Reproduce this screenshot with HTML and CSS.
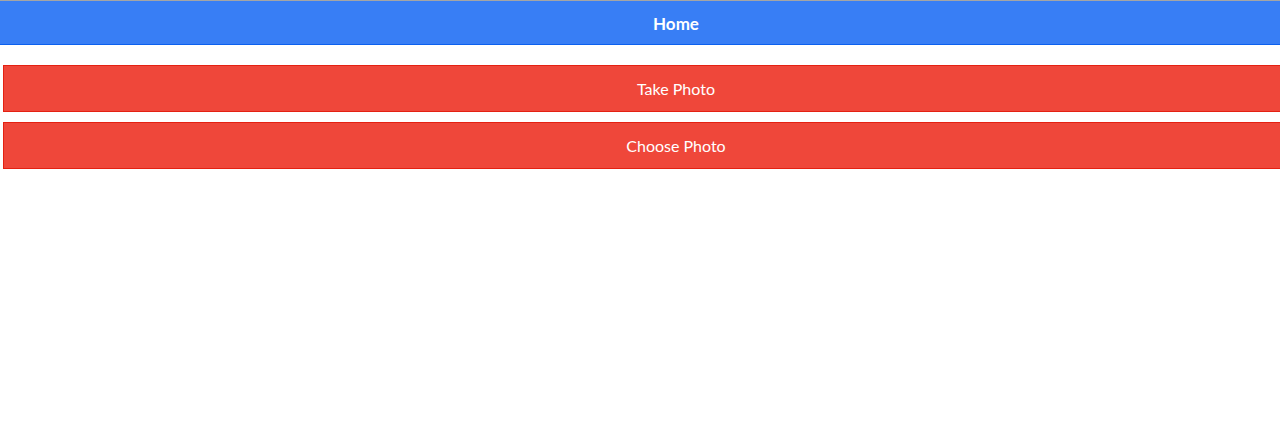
FILE: index.html
```html
<!DOCTYPE html>
<html>
<head>
<meta charset="utf-8">
<link rel="stylesheet" href="styles.css">
</head>
<body>
<div class="app">
  <header class="bar">
    <h1 class="title">Home</h1>
  </header>
  <main class="content">
    <button class="btn">Take Photo</button>
    <button class="btn">Choose Photo</button>
  </main>
</div>
</body>
</html>
```
FILE: styles.css
```css
html, body {
  margin: 0;
  padding: 0;
  background: #fff;
  font-family: Lato, "Open Sans", sans-serif;
}
.app {
  width: 100%;
}
.bar {
  box-sizing: border-box;
  height: 45px;
  padding-left: 72px;
  border-top: 1px solid #a5a5a5;
  border-bottom: 1px solid #0c60ee;
  background: #387ef5;
  display: flex;
  align-items: center;
  justify-content: center;
}
.title {
  margin: 1px 0 0 0;
  color: #fff;
  font-size: 17px;
  font-weight: 700;
}
.content {
  padding: 20px 0 0 3px;
  display: flex;
  flex-direction: column;
  gap: 10px;
}
.btn {
  box-sizing: border-box;
  display: block;
  width: 100%;
  height: 47px;
  margin: 0;
  border: 1px solid #e42112;
  border-right: 0;
  background: #ef473a;
  color: #fff;
  font-family: inherit;
  font-size: 16px;
  padding: 0 0 0 68px;
}
```
